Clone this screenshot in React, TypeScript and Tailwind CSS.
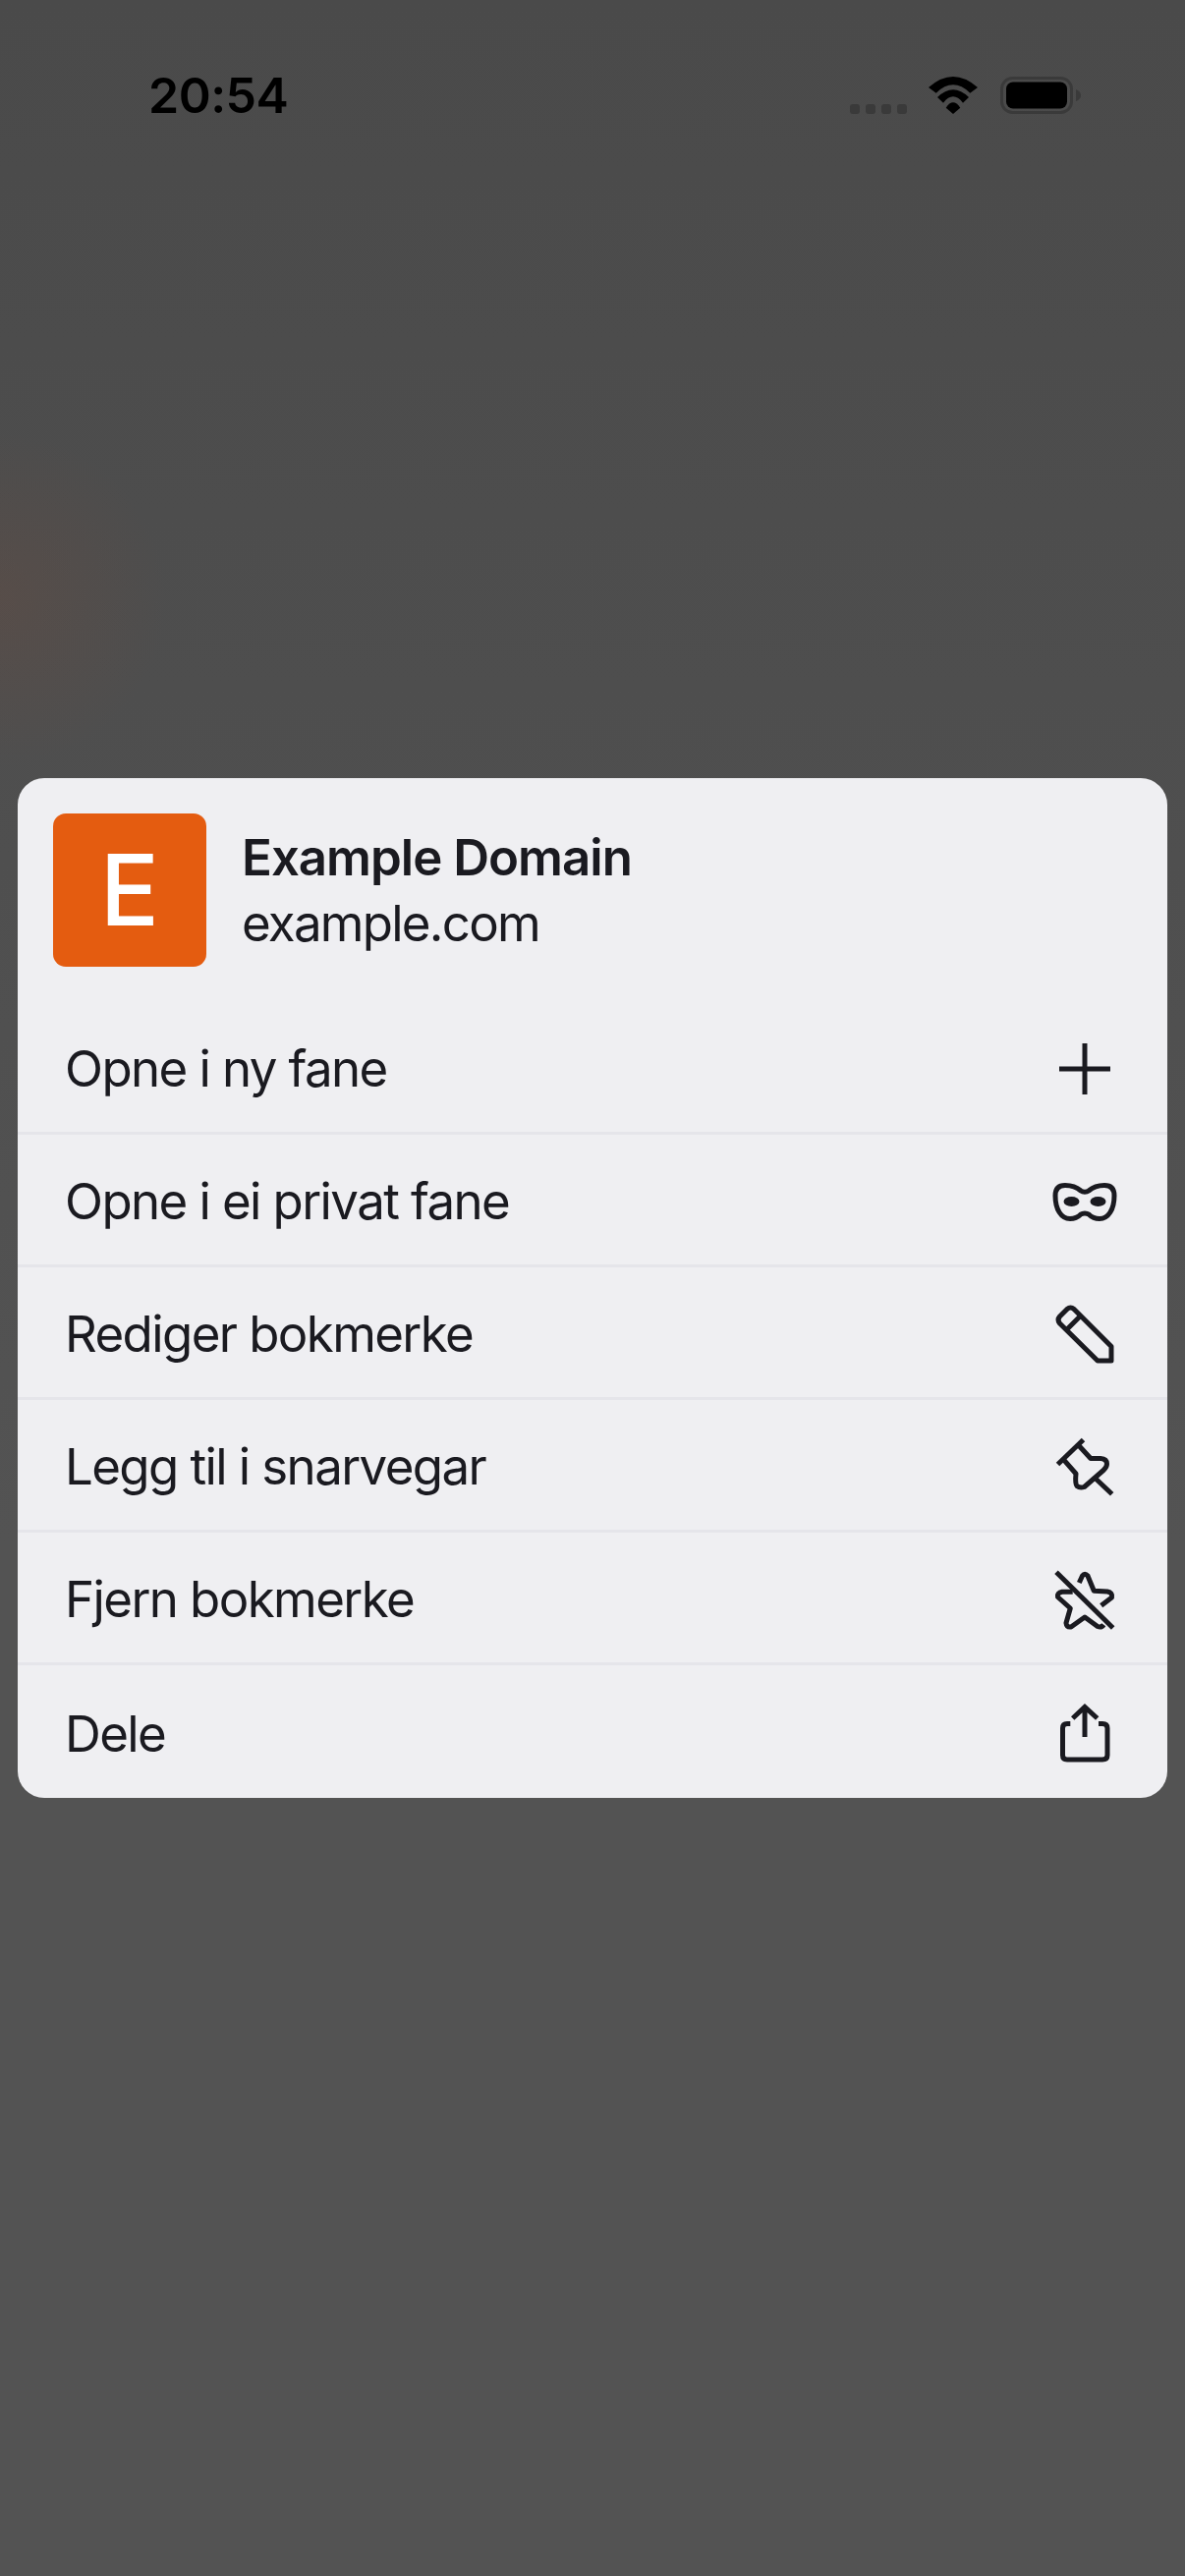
const rowIcon = 'w-[60px] h-[60px] overflow-visible fill-none stroke-[#1a1a20] stroke-[5px] shrink-0';

function PlusIcon() {
  return (
    <svg viewBox="0 0 60 60" className={rowIcon}>
      <path d="M30 4V56M4 30H56" />
    </svg>
  );
}

function MaskIcon() {
  return (
    <svg viewBox="0 0 60 60" className={rowIcon}>
      <path d="M10 13.5C18 13.5 22 15.5 26 19C28 20.5 32 20.5 34 19C38 15.5 42 13.5 50 13.5C57 13.5 60 17 60 24C60 38 54 47.5 45 47.5C39 47.5 36 45 34 43C32 41.5 28 41.5 26 43C24 45 21 47.5 15 47.5C6 47.5 0 38 0 24C0 17 3 13.5 10 13.5Z" />
      <ellipse cx="16.5" cy="30" rx="8" ry="5" fill="#1a1a20" stroke="none" />
      <ellipse cx="43.5" cy="30" rx="8" ry="5" fill="#1a1a20" stroke="none" />
    </svg>
  );
}

function PencilIcon() {
  return (
    <svg viewBox="0 0 60 60" className={rowIcon}>
      <path d="M4.5 12L12 4.5Q15.5 1.5 19 4.5L57 42.5V57H43L4.5 19Q1.5 15.5 4.5 12Z" strokeLinejoin="round" />
      <path d="M11 26L26 11" />
    </svg>
  );
}

function PinIcon() {
  return (
    <svg viewBox="0 0 60 60" className={rowIcon}>
      <path d="M2.5 27.5L28.5 2.5" />
      <path d="M24.3 8.7L36 21.5H46Q52.5 22 52.5 27Q52.5 30.5 49 33.5L29.5 50.5Q25 52 22 49.5Q20 47 21 37L9.3 23.7" strokeLinejoin="round" />
      <path d="M41 42L57.7 57.7" />
    </svg>
  );
}

function StarOffIcon() {
  return (
    <svg viewBox="0 0 60 60" className={rowIcon}>
      <path d="M1 2.3L58.7 59" />
      <path d="M24.3 13L27.5 6Q30 2.5 33 6L39.3 21.3L53 22Q58.5 23 57.5 28L46.7 36.3" strokeLinejoin="round" />
      <path d="M17.7 22.3L7 22.3Q1.5 23.5 2.5 27.5L15.3 39L11 54Q11.5 58.5 16 58L30 48L43 57.5Q47 59 49.3 55.7" strokeLinejoin="round" />
    </svg>
  );
}

function ShareIcon() {
  return (
    <svg viewBox="0 0 60 60" className={rowIcon}>
      <path d="M30 34V4M17.7 15L30 3.5L42.7 15" />
      <path d="M15.3 20.5H12Q7.5 20.5 7.5 25V52.5Q7.5 57 12 57H48Q53 57 53 52.5V25Q53 20.5 48 20.5H44" />
    </svg>
  );
}

const rows = [
  { label: 'Opne i ny fane', icon: <PlusIcon /> },
  { label: 'Opne i ei privat fane', icon: <MaskIcon /> },
  { label: 'Rediger bokmerke', icon: <PencilIcon /> },
  { label: 'Legg til i snarvegar', icon: <PinIcon /> },
  { label: 'Fjern bokmerke', icon: <StarOffIcon /> },
  { label: 'Dele', icon: <ShareIcon /> },
];

function StatusBar() {
  return (
    <div className="flex items-end justify-between h-[38px] pl-[151px] pr-[106px]">
      <span className="font-semibold text-[50px] leading-[38px] tracking-[-0.5px] text-black">20:54</span>
      <div className="flex items-end">
        <div className="flex gap-[6px]">
          <div className="w-[10px] h-[10px] rounded-[3px] bg-[#3a3a3a]" />
          <div className="w-[10px] h-[10px] rounded-[3px] bg-[#3a3a3a]" />
          <div className="w-[10px] h-[10px] rounded-[3px] bg-[#3a3a3a]" />
          <div className="w-[10px] h-[10px] rounded-[3px] bg-[#3a3a3a]" />
        </div>
        <svg viewBox="0 0 50 38" className="w-[50px] h-[38px] ml-[22px]">
          <path d="M0 11Q25 -11 50 11L42.3 16.7Q25 0 7.7 16.7Z" fill="#000" />
          <path d="M9 21Q25 5.5 41 21L35 26.7Q25 14 15 26.7Z" fill="#000" />
          <path d="M17.7 31.7Q25 21 32.3 31.7L25 38Z" fill="#000" />
        </svg>
        <svg viewBox="0 0 82 38" className="w-[82px] h-[38px] ml-[23px]">
          <rect x="1.5" y="1.5" width="71" height="35" rx="11" fill="none" stroke="#3a3a3a" strokeWidth="3" />
          <rect x="6" y="5.5" width="62" height="27" rx="7" fill="#000" />
          <path d="M77 13Q82 15 82 19Q82 23 77 25Z" fill="#3a3a3a" />
        </svg>
      </div>
    </div>
  );
}

export default function App() {
  return (
    <div className="w-[1206px] h-[2622px] overflow-hidden pt-[78px] font-['Inter','Noto_Sans',sans-serif] bg-[radial-gradient(circle_170px_at_0px_610px,rgba(125,75,55,0.2),transparent),linear-gradient(to_bottom,#4a4a4a,#535353_60%,#535353)]">
      <StatusBar />
      <div className="mt-[676px] mx-[18px] h-[1038px] rounded-[27px] bg-[#efeff2] text-[#1a1a20] overflow-hidden">
        <div className="flex items-center h-[228px] pl-[36px]">
          <div className="flex items-center justify-center w-[156px] h-[156px] rounded-[13px] bg-[#e45c10] text-white text-[100px] font-medium leading-none">
            E
          </div>
          <div className="flex flex-col ml-[36px] gap-[3px] pt-[1px]">
            <span className="text-[51px] leading-[64px] font-semibold tracking-[-1px]">Example Domain</span>
            <span className="text-[51px] leading-[64px] tracking-[-1.75px]">example.com</span>
          </div>
        </div>
        {rows.map((row, i) => (
          <div
            key={row.label}
            className={`flex items-center justify-between pl-[48px] pr-[54px] pt-[3px] ${i < rows.length - 1 ? 'h-[135px] border-b-[3px] border-[#e5e5ea]' : 'h-[135px]'}`}
          >
            <span className="text-[51px] leading-none tracking-[-1.6px]">{row.label}</span>
            {row.icon}
          </div>
        ))}
      </div>
    </div>
  );
}
